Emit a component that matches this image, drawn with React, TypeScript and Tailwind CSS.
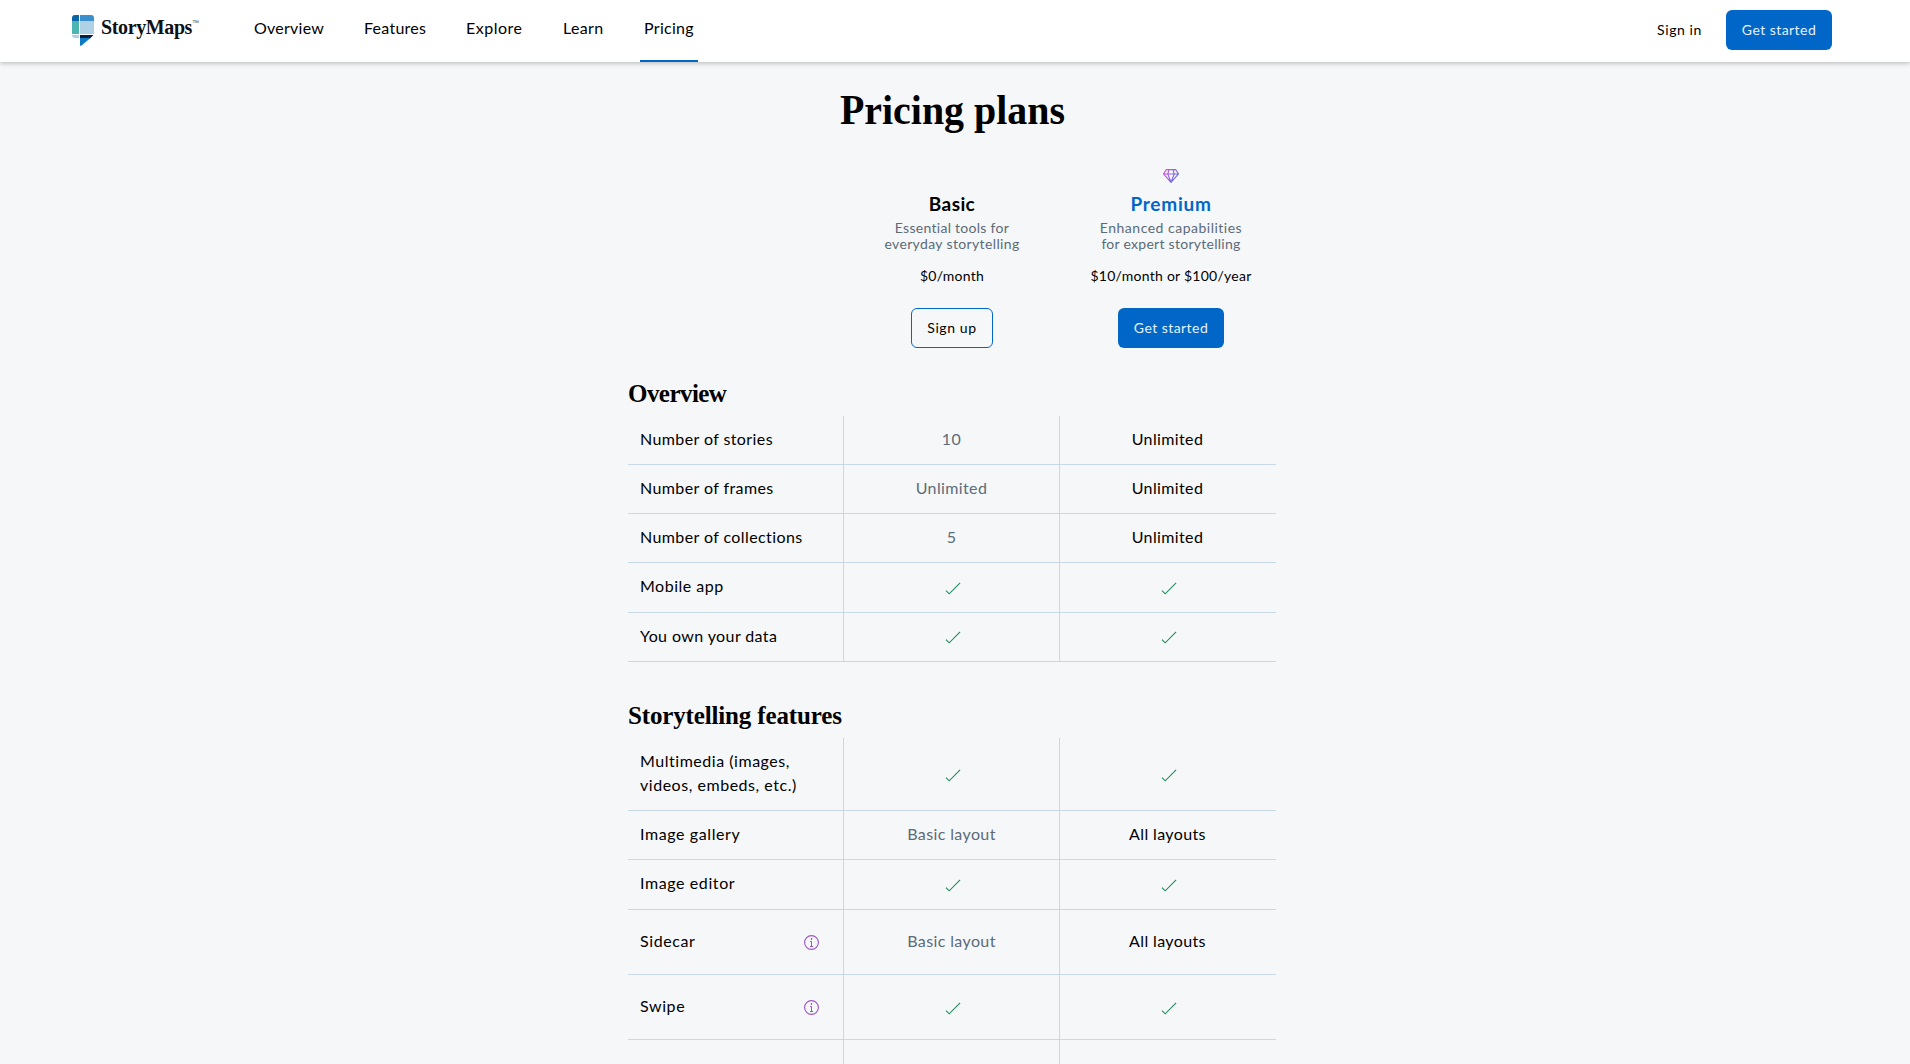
type Cell = "check" | string;

interface Row {
  label: string[];
  basic: Cell;
  premium: Cell;
  height: string;
  pad: string;
  iconTop: string;
  info?: boolean;
  tracking?: string;
}

interface Section {
  title: string;
  spacing: string;
  tracking: string;
  rows: Row[];
}

const SECTIONS: Section[] = [
  {
    title: "Overview",
    spacing: "mt-[31px] mb-[7px]",
    tracking: "tracking-[-0.55px]",
    rows: [
      { label: ["Number of stories"], basic: "10", premium: "Unlimited", height: "h-[49px]", pad: "pt-[11px]", iconTop: "pt-[18px]" },
      { label: ["Number of frames"], basic: "Unlimited", premium: "Unlimited", height: "h-[49px]", pad: "pt-[11px]", iconTop: "pt-[18px]" },
      { label: ["Number of collections"], basic: "5", premium: "Unlimited", height: "h-[49px]", pad: "pt-[11px]", iconTop: "pt-[18px]" },
      { label: ["Mobile app"], basic: "check", premium: "check", height: "h-[50px]", pad: "pt-[11px]", iconTop: "pt-[18px]", tracking: "tracking-[0.5px]" },
      { label: ["You own your data"], basic: "check", premium: "check", height: "h-[49px]", pad: "pt-[11px]", iconTop: "pt-[17px]" },
    ],
  },
  {
    title: "Storytelling features",
    spacing: "mt-[39px] mb-[7px]",
    tracking: "tracking-[-0.15px]",
    rows: [
      { label: ["Multimedia (images,", "videos, embeds, etc.)"], basic: "check", premium: "check", height: "h-[73px]", pad: "pt-[11px]", iconTop: "pt-[30px]", tracking: "tracking-[0.53px]" },
      { label: ["Image gallery"], basic: "Basic layout", premium: "All layouts", height: "h-[49px]", pad: "pt-[11px]", iconTop: "pt-[18px]", tracking: "tracking-[0.6px]" },
      { label: ["Image editor"], basic: "check", premium: "check", height: "h-[50px]", pad: "pt-[11px]", iconTop: "pt-[18px]", tracking: "tracking-[0.6px]" },
      { label: ["Sidecar"], basic: "Basic layout", premium: "All layouts", height: "h-[65px]", pad: "pt-[19px]", iconTop: "pt-[26px]", info: true, tracking: "tracking-[0.6px]" },
      { label: ["Swipe"], basic: "check", premium: "check", height: "h-[65px]", pad: "pt-[19px]", iconTop: "pt-[26px]", info: true, tracking: "tracking-[0.6px]" },
      { label: [], basic: "", premium: "", height: "h-[65px]", pad: "pt-[19px]", iconTop: "pt-[26px]" },
    ],
  },
];

const NAV = [
  { label: "Overview", width: "w-[78px]", tracking: "tracking-[0.25px]" },
  { label: "Features", width: "w-[70px]", tracking: "tracking-[0.25px]" },
  { label: "Explore", width: "w-[65px]", tracking: "tracking-[0.5px]" },
  { label: "Learn", width: "w-[49px]", tracking: "tracking-[0.35px]" },
  { label: "Pricing", width: "w-[58px]", tracking: "tracking-[0.3px]" },
];

function Logo() {
  return (
    <div className="flex items-start">
      <svg width="22" height="31" viewBox="0 0 22 31" aria-hidden="true">
        <path d="M0 6V3a3 3 0 0 1 3-3h4v6z" fill="#0a64a8" />
        <path d="M8 6V0h11a3 3 0 0 1 3 3v3z" fill="#3a8fcd" />
        <path d="M0 6h7v13H0z" fill="#4bb5b2" />
        <path d="M8 6h14v13H8z" fill="#afd1e6" />
        <path d="M0 20h7v3H3a3 3 0 0 1-3-3z" fill="#afd1e6" />
        <path d="M8 20h13.5L18 23.4H8z" fill="#04213f" />
        <path d="M8 23h10.4L9.6 30.4Q8.8 31 8 30.8z" fill="#0f7ac4" />
      </svg>
      <span className="ml-[7px] font-['Liberation_Serif',serif] text-[20px] leading-6 font-bold tracking-[-0.38px] text-[#0c1116]">
        StoryMaps
      </span>
      <span className="mt-[5px] font-['Liberation_Sans',sans-serif] text-[7px] leading-[6px] text-[#555]">™</span>
    </div>
  );
}

function Check() {
  return (
    <svg className="ml-[3px]" width="16" height="14" viewBox="0 0 16 14" fill="none" stroke="#1f8a5b" strokeWidth="1.1" aria-hidden="true">
      <path d="M1 9.7 4.2 12.8 15.1 1.9" />
    </svg>
  );
}

function InfoIcon() {
  return (
    <svg className="mt-[6px] mr-[24px] shrink-0" width="15" height="15" viewBox="0 0 15 15" fill="none" stroke="#9a55c4" aria-hidden="true">
      <circle cx="7.5" cy="7.5" r="6.9" strokeWidth="1.1" />
      <path d="M6 6.5h1.5v5M6 11.5h3" strokeWidth="1" />
      <path d="M7.5 3v2M6.8 4h1.4" strokeWidth="1" />
    </svg>
  );
}

function Diamond() {
  return (
    <svg width="16" height="14" viewBox="0 0 16 14" fill="none" aria-hidden="true">
      <defs>
        <linearGradient id="gem" x1="0" y1="3" x2="14" y2="12" gradientUnits="userSpaceOnUse">
          <stop offset="0" stopColor="#cf55cc" />
          <stop offset="1" stopColor="#5a70e8" />
        </linearGradient>
      </defs>
      <path
        d="M3.4.6h9.2l2.9 4.2L8 13.4.5 4.8zM.5 5h15M5.9.6 4.8 5 8 13.2 11.2 5 10.1.6"
        stroke="url(#gem)"
        strokeWidth="1.1"
        strokeLinejoin="round"
      />
    </svg>
  );
}

function Value({ value, row, tone }: { value: Cell; row: Row; tone: string }) {
  return (
    <div className={`flex justify-center ${value === "check" ? row.iconTop : row.pad} ${tone}`}>
      {value === "check" ? <Check /> : <span className="tracking-[0.38px]">{value}</span>}
    </div>
  );
}

function FeatureTable({ section }: { section: Section }) {
  return (
    <section>
      <h2 className={`font-['Liberation_Serif',serif] text-[25px] leading-[30px] font-bold ${section.tracking} ${section.spacing}`}>
        {section.title}
      </h2>
      {section.rows.map((row, i) => (
        <div key={i} className={`grid w-[648px] grid-cols-[215px_216px_217px] border-b border-[#c8d8e4] leading-6 ${row.height}`}>
          <div className={`flex justify-between pl-3 ${row.pad}`}>
            <div className={row.tracking ?? "tracking-[0.4px]"}>
              {row.label.map((line) => (
                <p key={line} className="whitespace-nowrap">{line}</p>
              ))}
            </div>
            {row.info && <InfoIcon />}
          </div>
          <Value value={row.basic} row={row} tone="border-l border-[#c8d8e4] text-[#5b6b78]" />
          <Value value={row.premium} row={row} tone="border-l border-[#c8d8e4] pr-px" />
        </div>
      ))}
    </section>
  );
}

export default function App() {
  return (
    <div className="h-[1064px] overflow-hidden bg-[#f6f7f9] font-['Lato',sans-serif] text-base text-black [font-variant-ligatures:none]">
      <header className="relative flex h-[62px] items-start bg-white pr-[78px] pl-[72px] shadow-[0_1px_5px_rgba(0,0,0,0.28)]">
        <div className="w-[178px] pt-[15px]">
          <Logo />
        </div>
        <nav className="flex gap-8">
          {NAV.map((item) => (
            <a
              key={item.label}
              className={`h-[62px] pt-4 pl-1 leading-6 whitespace-nowrap ${item.width} ${item.tracking} ${
                item.label === "Pricing" ? "border-b-2 border-[#0066c7]" : ""
              }`}
            >
              {item.label}
            </a>
          ))}
        </nav>
        <div className="ml-auto flex items-center pt-[10px] text-[14px]">
          <a className="mr-6 pb-0.5 tracking-[0.6px]">Sign in</a>
          <button className="h-10 w-[106px] rounded-md bg-[#0066c7] pb-0.5 tracking-[0.45px] text-[#e8f1fa]">Get started</button>
        </div>
      </header>

      <main className="ml-[628px] w-[654px]">
        <h1 className="mt-6 w-[648px] text-center font-['Liberation_Serif',serif] text-[42px] leading-[48px] font-bold">
          <span className="inline-block scale-x-[0.95]">Pricing plans</span>
        </h1>

        <div className="mt-[35px] ml-[216px] grid grid-cols-[216px_222px] text-center text-[14px] leading-4">
          <div className="flex flex-col items-center pt-[23px]">
            <h3 className="text-[19px] leading-6 font-bold tracking-[0.4px]">Basic</h3>
            <p className="mt-1 text-[#5b6b78]">
              <span className="tracking-[0.28px]">Essential tools for</span>
              <br />
              <span className="tracking-[0.36px]">everyday storytelling</span>
            </p>
            <p className="mt-4 tracking-[0.25px]">$0/month</p>
            <button className="mt-6 h-10 w-[82px] rounded-md border border-[#0066c7] tracking-[0.6px]">Sign up</button>
          </div>
          <div className="flex flex-col items-center">
            <Diamond />
            <h3 className="mt-[9px] text-[19px] leading-6 font-bold tracking-[0.75px] text-[#0066c7]">Premium</h3>
            <p className="mt-1 text-[#5b6b78]">
              <span className="tracking-[0.5px]">Enhanced capabilities</span>
              <br />
              <span className="tracking-[0.27px]">for expert storytelling</span>
            </p>
            <p className="mt-4 tracking-[0.25px]">$10/month or $100/year</p>
            <button className="mt-6 h-10 w-[106px] rounded-md bg-[#0066c7] tracking-[0.45px] text-[#e8f1fa]">Get started</button>
          </div>
        </div>

        {SECTIONS.map((section) => (
          <FeatureTable key={section.title} section={section} />
        ))}
      </main>
    </div>
  );
}
